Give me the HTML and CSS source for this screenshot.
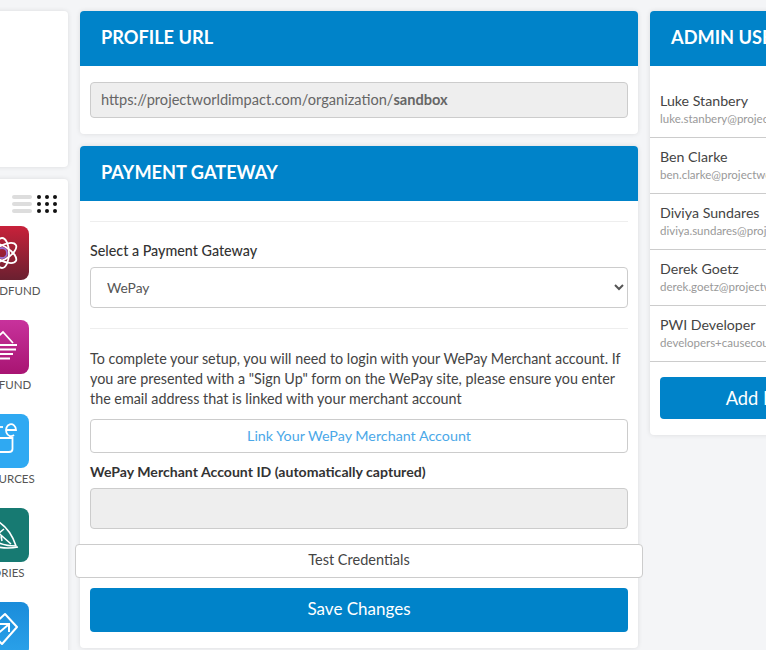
FILE: index.html
```html
<!DOCTYPE html>
<html lang="en">
<head>
    <meta charset="UTF-8">
    <meta name="viewport" content="width=device-width, initial-scale=1.0">
    <title>Organization Settings</title>
    <link rel="stylesheet" href="styles.css">
</head>
<body>

<div class="page">
    <div class="side">
        <div class="card side-top"></div>
        <div class="card side-apps">
            <div class="view-toggle">
                <div class="view-list"><span></span><span></span><span></span></div>
                <div class="view-grid">
                    <i></i><i></i><i></i><i></i><i></i><i></i><i></i><i></i><i></i>
                </div>
            </div>

            <div class="app">
                <div class="app-icon app-red">
                    <svg width="54" height="54" viewBox="0 0 54 54" fill="none" stroke="#fff" stroke-width="1.8">
                        <ellipse cx="27" cy="27" rx="7" ry="16" transform="rotate(60 27 27)"/>
                        <ellipse cx="27" cy="27" rx="7" ry="16" transform="rotate(-60 27 27)"/>
                        <ellipse cx="27" cy="27" rx="7" ry="15"/>
                        <circle cx="27" cy="27" r="5" stroke="#9a6fd0"/>
                    </svg>
                </div>
                <div class="app-name">CROWDFUND</div>
            </div>
            <div class="app">
                <div class="app-icon app-pink">
                    <svg width="54" height="54" viewBox="0 0 54 54" fill="none" stroke="#fff" stroke-width="1.8">
                        <path d="M16 23 L28 12 L38 23"/>
                        <path d="M11 25 H42 M13 29.500 H41 M16 34 H38 M19 38.500 H35"/>
                    </svg>
                </div>
                <div class="app-name">GIVEFUND</div>
            </div>
            <div class="app">
                <div class="app-icon app-sky">
                    <svg width="54" height="54" viewBox="0 0 54 54" fill="none" stroke="#fff" stroke-width="1.8">
                        <path d="M18 13 H28"/>
                        <path d="M32 16 H41 A5 6 0 1 0 39 21"/>
                        <path d="M16 24 H37.500 V35 Q37.500 38 34 38 H14"/>
                    </svg>
                </div>
                <div class="app-name">RESOURCES</div>
            </div>
            <div class="app">
                <div class="app-icon app-teal">
                    <svg width="54" height="54" viewBox="0 0 54 54" fill="none" stroke="#fff" stroke-width="1.6">
                        <path d="M24 14 Q36 22 41 38 Q30 38 22 34 Q12 28 14 20 Q18 15 24 14 Z"/>
                        <path d="M18 20 L36 36 M24 25 L29 21 M26 28 L27 33"/>
                        <path d="M12 36 Q28 42 43 39"/>
                    </svg>
                </div>
                <div class="app-name">STORIES</div>
            </div>
            <div class="app">
                <div class="app-icon app-blue">
                    <svg width="54" height="54" viewBox="0 0 54 54" fill="none" stroke="#fff" stroke-width="2">
                        <path d="M30 12 L42 25 L27 42 L13 28 Z" stroke-linejoin="round"/>
                        <path d="M20 34 L33 23 M25 22 H34 V30"/>
                    </svg>
                </div>
            </div>
        </div>
    </div>

    <div class="main">
        <div class="card">
            <div class="card-head">PROFILE URL</div>
            <div class="card-body url-body">
                <div class="field field-url">https://projectworldimpact.com/organization/<b>sandbox</b></div>
            </div>
        </div>

        <div class="card card-payment">
            <div class="card-head">PAYMENT GATEWAY</div>
            <div class="card-body">
                <hr class="rule rule-first">
                <label class="label" for="gateway">Select a Payment Gateway</label>
                <select id="gateway" class="select">
                    <option>WePay</option>
                </select>
                <hr class="rule rule-second">
                <p class="note">To complete your setup, you will need to login with your WePay Merchant account. If you are presented with a "Sign Up" form on the WePay site, please ensure you enter the email address that is linked with your merchant account</p>
                <a class="btn-link">Link Your WePay Merchant Account</a>
                <label class="label label-id" for="merchantId">WePay Merchant Account ID (automatically captured)</label>
                <input id="merchantId" class="field field-id" type="text" disabled>
                <button class="btn-test">Test Credentials</button>
                <button class="btn-save">Save Changes</button>
            </div>
        </div>
    </div>

    <div class="admins">
        <div class="card">
            <div class="card-head">ADMIN USERS</div>
            <div class="user-list">
                <div class="user">
                    <div class="user-name">Luke Stanbery</div>
                    <div class="user-mail">luke.stanbery@projectworldimpact.com</div>
                </div>
                <div class="user">
                    <div class="user-name">Ben Clarke</div>
                    <div class="user-mail">ben.clarke@projectworldimpact.com</div>
                </div>
                <div class="user">
                    <div class="user-name">Diviya Sundares</div>
                    <div class="user-mail">diviya.sundares@projectworldimpact.com</div>
                </div>
                <div class="user">
                    <div class="user-name">Derek Goetz</div>
                    <div class="user-mail">derek.goetz@projectworldimpact.com</div>
                </div>
                <div class="user">
                    <div class="user-name">PWI Developer</div>
                    <div class="user-mail">developers+causecoupon@gmail.com</div>
                </div>
            </div>
            <div class="admins-foot">
                <button class="btn-add">Add New Admin</button>
            </div>
        </div>
    </div>
</div>

</body>
</html>
```

FILE: styles.css
```css
html, body {
    height: 100%;
    overflow: hidden;
}
body {
    font-family: Lato, 'Open Sans', sans-serif;
    background-color: #f4f5f7;
    color: #333;
    margin: 0;
}
.page {
    display: flex;
    gap: 12px;
    align-items: flex-start;
    margin-left: -52px;
    padding-top: 11px;
    width: 1000px;
}
.card {
    background-color: white;
    border-radius: 4px;
    box-shadow: 0 0 5px rgba(0, 0, 0, 0.1);
    overflow: hidden;
}
.card-head {
    background-color: #0083c9;
    color: white;
    font-size: 18.200px;
    font-weight: 700;
    height: 55px;
    line-height: 52px;
    padding-left: 21px;
}
.card-body {
    padding: 20px 10px 16px;
}

/* left column */
.side {
    width: 120px;
    flex: none;
    display: flex;
    flex-direction: column;
    gap: 12px;
}
.side-top {
    height: 156px;
}
.side-apps {
    height: 480px;
    padding-top: 16px;
}
.view-toggle {
    display: flex;
    justify-content: flex-end;
    align-items: center;
    gap: 5px;
    padding-right: 11px;
    margin-bottom: 13px;
}
.view-list {
    display: flex;
    flex-direction: column;
    gap: 3px;
    width: 20px;
}
.view-list span {
    height: 4px;
    border-radius: 2px;
    background-color: #ddd;
}
.view-grid {
    display: grid;
    grid-template-columns: repeat(3, 4px);
    gap: 3px 4px;
}
.view-grid i {
    width: 4px;
    height: 4px;
    border-radius: 50%;
    background-color: #111;
}
.app {
    width: 100px;
    margin-left: 4px;
    height: 94px;
    display: flex;
    flex-direction: column;
    align-items: center;
}
.app-icon {
    width: 54px;
    height: 54px;
    border-radius: 8px;
    flex: none;
}
.app-red { background: linear-gradient(#c8213a, #6a2030); }
.app-pink { background: linear-gradient(#c8329c, #a81472); }
.app-sky { background-color: #2fa9f2; }
.app-teal { background-color: #177a72; }
.app-blue { background: linear-gradient(#1a8cda, #2ba2ea); }
.app-name {
    font-size: 11.500px;
    color: #555;
    margin-top: 4px;
    white-space: nowrap;
}

/* middle column */
.main {
    width: 558px;
    flex: none;
    display: flex;
    flex-direction: column;
    gap: 12px;
}
.url-body {
    padding: 16px 10px 16px;
}
.field {
    display: block;
    width: 100%;
    box-sizing: border-box;
    background-color: #eee;
    border: 1px solid #ccc;
    border-radius: 4px;
    font-family: inherit;
}
.field-url {
    height: 36px;
    line-height: 34px;
    padding-left: 10px;
    font-size: 14.600px;
    color: #666;
}
.field-id {
    height: 41px;
    margin-bottom: 15px;
}
.rule {
    border: 0;
    border-top: 1px solid #eee;
    margin: 0;
}
.rule-first {
    margin-bottom: 19px;
}
.rule-second {
    margin-top: 20px;
    margin-bottom: 20px;
}
.label {
    display: block;
    font-size: 14.300px;
    font-weight: 500;
    color: #333;
    line-height: 20px;
    margin-bottom: 6px;
}
.label-id {
    margin-top: 9px;
    margin-bottom: 6px;
    font-weight: 700;
    font-size: 14.100px;
}
.select {
    display: block;
    width: 100%;
    height: 41px;
    box-sizing: border-box;
    background-color: white;
    border: 1px solid #ccc;
    border-radius: 4px;
    font-family: inherit;
    font-size: 13.800px;
    color: #555;
    padding-left: 12px;
}
.note {
    margin: 0 0 10px;
    font-size: 14.340px;
    line-height: 20px;
    color: #444;
}
.btn-link {
    display: block;
    height: 34px;
    box-sizing: border-box;
    border: 1px solid #ccc;
    border-radius: 4px;
    text-align: center;
    line-height: 32px;
    font-size: 14.300px;
    color: #4ba8e8;
}
.btn-test {
    display: block;
    position: relative;
    width: 568px;
    margin-left: -15px;
    height: 34px;
    padding-bottom: 4px;
    background-color: white;
    border: 1px solid #ccc;
    border-radius: 4px;
    font-family: inherit;
    font-size: 14.500px;
    color: #444;
}
.btn-save {
    display: block;
    width: 100%;
    height: 44px;
    margin-top: 10px;
    padding-bottom: 4px;
    background-color: #0083c9;
    border: 0;
    border-radius: 4px;
    font-family: inherit;
    font-size: 17px;
    color: white;
}

/* the test button sticks out past the card */
.card-payment {
    overflow: visible;
}
.card-payment .card-head {
    border-radius: 4px 4px 0 0;
}

/* right column */
.admins {
    width: 282px;
    flex: none;
}
.user-list {
    padding-top: 16px;
}
.user {
    height: 56px;
    padding: 9px 10px 0;
    box-sizing: border-box;
    border-bottom: 1px solid #ccc;
}
.user-name {
    font-size: 14.200px;
    line-height: 20px;
    color: #444;
}
.user-mail {
    font-size: 11.500px;
    line-height: 16px;
    color: #999;
    white-space: nowrap;
}
.admins-foot {
    padding: 15px 10px 16px;
}
.btn-add {
    display: block;
    width: 100%;
    height: 42px;
    padding-bottom: 2px;
    background-color: #0083c9;
    border: 0;
    border-radius: 4px;
    font-family: inherit;
    font-size: 18.300px;
    color: white;
}
```
